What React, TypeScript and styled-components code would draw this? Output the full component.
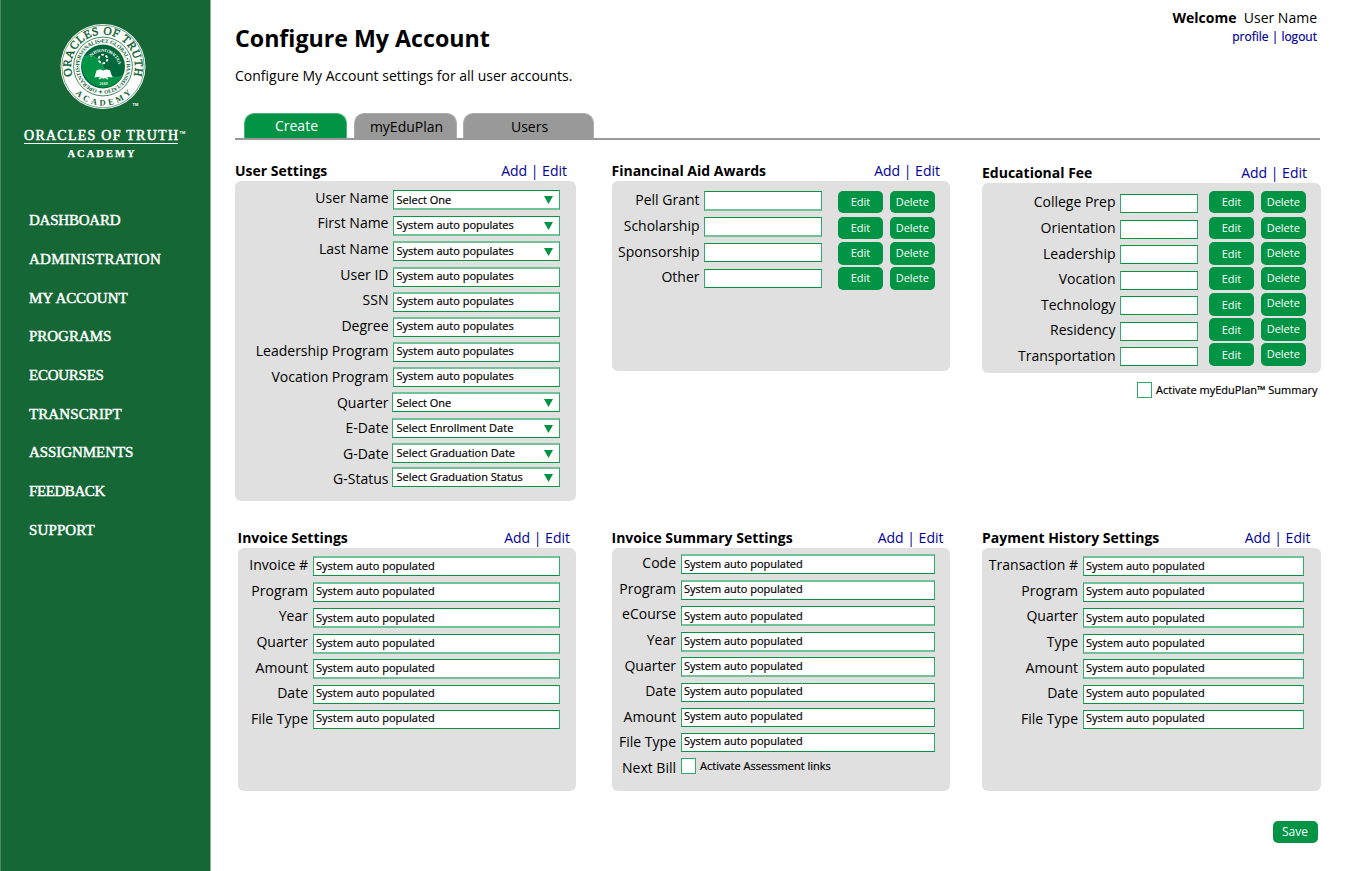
import React from "react";
import styled, { createGlobalStyle } from "styled-components";

const GREEN = "#009444";
const SOFT = "#73c297";

const GlobalStyle = createGlobalStyle`
  * { box-sizing: border-box; }
  body {
    margin: 0;
    background: #fff;
    color: #000;
    font-family: "Open Sans", "Noto Sans", sans-serif;
    font-size: 14px;
    line-height: 20px;
  }
`;

const Page = styled.div`
  display: flex;
  width: 1353px;
  height: 871px;
  overflow: hidden;
`;

const Sidebar = styled.aside`
  flex: none;
  width: 211px;
  height: 871px;
  background: #156735;
  border-left: 1px solid #4c8a63;
  border-right: 1px solid #8ab39a;
`;

const Logo = styled.svg`
  display: block;
  margin-left: -1px;
`;

const Nav = styled.nav`
  display: flex;
  flex-direction: column;
  padding: 40px 0 0 28px;
`;

const NavItem = styled.a<{ $h: number; $ls: number }>`
  height: ${(p) => p.$h}px;
  line-height: 20px;
  color: #fff;
  font-family: "Liberation Serif", serif;
  font-size: 15px;
  letter-spacing: ${(p) => p.$ls}px;
  -webkit-text-stroke: 0.45px #fff;
  white-space: nowrap;
`;

const Main = styled.main`
  flex: 1;
  padding-left: 24px;
`;

const Header = styled.header`
  display: flex;
  justify-content: space-between;
  width: 1082px;
  height: 113px;
`;

const Title = styled.h1`
  margin: 0;
  padding-top: 21px;
  font-size: 23.2px;
  line-height: 34px;
`;

const Subtitle = styled.p`
  margin: 11px 0 0;
`;

const Account = styled.div`
  padding-top: 8px;
  text-align: right;
`;

const Welcome = styled.div`
  white-space: pre;
`;

const AccountLinks = styled.div`
  font-size: 12px;
  line-height: 18px;
  color: #000099;
  -webkit-text-stroke: 0.2px #000099;
`;

const Tabs = styled.div`
  display: flex;
  width: 1085px;
  height: 27px;
  padding-left: 9px;
  border-bottom: 2px solid #999;
`;

const Tab = styled.button<{ $w: number; $gap: number; $active?: boolean }>`
  width: ${(p) => p.$w}px;
  height: 25px;
  margin: 0 ${(p) => p.$gap}px 0 0;
  padding: ${(p) => (p.$active ? 0 : 2)}px 0 ${(p) => (p.$active ? 1 : 0)}px 2px;
  border: 1px solid ${(p) => (p.$active ? "#4db37c" : "#adadad")};
  border-bottom: 0;
  border-radius: 10px 10px 0 0;
  background: ${(p) => (p.$active ? GREEN : "#999")};
  color: ${(p) => (p.$active ? "#fff" : "#000")};
  font: 14px/20px "Open Sans", sans-serif;
  text-align: center;
`;

const Board = styled.div`
  display: grid;
  grid-template-columns: 341px 339px 339px;
  column-gap: 35.5px;
  grid-template-rows: 367px auto;
  padding-top: 21px;
`;

const Section = styled.section<{ $left?: number; $top?: number; $width?: number }>`
  width: ${(p) => p.$width ?? 338.5}px;
  margin-left: ${(p) => p.$left ?? 0}px;
  padding-top: ${(p) => p.$top ?? 0}px;
`;

const SectionHead = styled.div<{ $right: number }>`
  display: flex;
  justify-content: space-between;
  height: 20px;
  padding-right: ${(p) => p.$right}px;
  white-space: nowrap;
`;

const SectionTitle = styled.h2`
  margin: 0;
  font-size: 14px;
  line-height: 20px;
`;

const SectionLinks = styled.span`
  color: #000099;
`;

const Panel = styled.div<{ $h: number; $pad: number }>`
  height: ${(p) => p.$h}px;
  padding-top: ${(p) => p.$pad}px;
  border-radius: 6px;
  background: #e0e0e0;
`;

const Row = styled.div<{ $h: number }>`
  display: flex;
  align-items: flex-start;
  height: ${(p) => p.$h}px;
`;

const Label = styled.label<{ $w: number }>`
  flex: none;
  width: ${(p) => p.$w}px;
  padding-right: 0.5px;
  margin-right: 4px;
  text-align: right;
  white-space: nowrap;
`;

type Edge = "top" | "bottom" | "none";

const Field = styled.div<{ $w: number; $dy: number; $soft: Edge; $wide?: boolean }>`
  flex: none;
  display: flex;
  justify-content: space-between;
  width: ${(p) => p.$w + (p.$wide ? 1 : 0)}px;
  height: ${(p) => (p.$soft === "none" ? 19 : 20)}px;
  margin-top: ${(p) => p.$dy}px;
  margin-left: ${(p) => (p.$wide ? -1 : 0)}px;
  padding: 0 5.5px 0 ${(p) => (p.$wide ? 3.5 : 2.5)}px;
  border: 1px solid #33a969;
  border-top: ${(p) => (p.$soft === "top" ? `2px solid ${SOFT}` : `1px solid ${GREEN}`)};
  border-bottom: ${(p) => (p.$soft === "bottom" ? `2px solid ${SOFT}` : `1px solid ${GREEN}`)};
  background: #fff;
`;

const FieldText = styled.span<{ $dy: number }>`
  height: 18px;
  margin-top: ${(p) => p.$dy}px;
  font-size: 11px;
  line-height: 18px;
  white-space: nowrap;
  -webkit-text-stroke: 0.2px #000;
`;

const Arrow = styled.svg`
  width: 9px;
  height: 8px;
  margin-top: 5px;
`;

const Button = styled.button<{ $dy?: number; $text?: number; $ml?: number; $fs?: number }>`
  flex: none;
  width: 45px;
  height: 22.5px;
  margin: ${(p) => p.$dy ?? 0}px 0 0 ${(p) => p.$ml ?? 0}px;
  padding: ${(p) => 2 + (p.$text ?? 0)}px 0 0;
  border: 0;
  border-radius: 5px;
  background: ${GREEN};
  color: #fff;
  display: flex;
  justify-content: center;
  font: ${(p) => p.$fs ?? 11}px/18px "Open Sans", sans-serif;
`;

const CheckLine = styled.div<{ $ml: number; $mt: number }>`
  display: flex;
  align-items: flex-start;
  margin: ${(p) => p.$mt}px 0 0 ${(p) => p.$ml}px;
  font-size: 11px;
  line-height: 16px;
  white-space: nowrap;
  -webkit-text-stroke: 0.2px #000;
`;

const CheckBox = styled.span`
  flex: none;
  width: 15px;
  height: 16px;
  margin-right: 4.5px;
  border: 1px solid #33a969;
  background: #fff;
`;

const Footer = styled.footer`
  display: flex;
  justify-content: flex-end;
  width: 1082.5px;
  padding-top: 29.5px;
`;

const NAV: [string, number, number][] = [
  ["DASHBOARD", 39, -0.22],
  ["ADMINISTRATION", 39, 0.26],
  ["MY ACCOUNT", 38, -0.05],
  ["PROGRAMS", 39, -0.02],
  ["ECOURSES", 39, -0.25],
  ["TRANSCRIPT", 38, 0.1],
  ["ASSIGNMENTS", 39, -0.06],
  ["FEEDBACK", 39, -0.42],
  ["SUPPORT", 39, 0.12],
];

type Item = {
  label: string;
  h: number;
  f: number;
  t?: number;
  value?: string;
  select?: boolean;
  soft?: Edge;
  wide?: boolean;
};

const POPULATES = "System auto populates";
const POPULATED = "System auto populated";

const USER: Item[] = [
  { label: "User Name", h: 25, f: 2, t: 0, value: "Select One", select: true, soft: "bottom" },
  { label: "First Name", h: 26, f: 3, t: -1, value: POPULATES, select: true, soft: "bottom" },
  { label: "Last Name", h: 26, f: 2, t: 0, value: POPULATES, select: true, soft: "top" },
  { label: "User ID", h: 25, f: 2, t: -1, value: POPULATES, soft: "top" },
  { label: "SSN", h: 26, f: 2, t: -1, value: POPULATES, soft: "top" },
  { label: "Degree", h: 25, f: 1, t: -1, value: POPULATES, soft: "top" },
  { label: "Leadership Program", h: 26, f: 1, t: -1, value: POPULATES, soft: "top" },
  { label: "Vocation Program", h: 26, f: 0, t: -1, value: POPULATES, soft: "top" },
  { label: "Quarter", h: 25, f: -1, t: 1, value: "Select One", select: true, soft: "top", wide: true },
  { label: "E-Date", h: 26, f: 0, t: 0, value: "Select Enrollment Date", select: true, soft: "top", wide: true },
  { label: "G-Date", h: 25, f: -1, t: 0, value: "Select Graduation Date", select: true, soft: "top", wide: true },
  { label: "G-Status", h: 20, f: -2, t: 0, value: "Select Graduation Status", select: true, soft: "top", wide: true },
];

const sevenRows = (labels: string[]): Item[] => {
  const h = [26, 25, 26, 26, 25, 26, 20];
  const f = [1, 1, 2, 2, 1, 2, 1];
  const t = [0, -1, 0, -1, -1, -2, -2];
  const soft: Edge[] = ["top", "top", "bottom", "bottom", "bottom", "none", "none"];
  return labels.map((label, i) => ({ label, h: h[i], f: f[i], t: t[i], soft: soft[i], value: POPULATED }));
};

const INVOICE = sevenRows(["Invoice #", "Program", "Year", "Quarter", "Amount", "Date", "File Type"]);
const PAYMENT = sevenRows(["Transaction #", "Program", "Quarter", "Type", "Amount", "Date", "File Type"]);
const SUMMARY: Item[] = [
  ...sevenRows(["Code", "Program", "eCourse", "Year", "Quarter", "Date", "Amount"]).map((r, i) =>
    i === 6 ? { ...r, h: 25 } : r
  ),
  { label: "File Type", h: 26, f: 1, t: -2, value: POPULATED, soft: "none" },
];

type ButtonItem = { label: string; h: number; f: number; b: number; e: number; d: number; soft: Edge };

const AID: ButtonItem[] = [
  { label: "Pell Grant", h: 26, f: 1, b: 0.7, e: 0, d: 0, soft: "bottom" },
  { label: "Scholarship", h: 26, f: 1, b: 0.7, e: 0, d: 0, soft: "bottom" },
  { label: "Sponsorship", h: 25, f: 1, b: 0, e: 0, d: 0, soft: "none" },
  { label: "Other", h: 20, f: 2, b: 0, e: 0, d: 0, soft: "none" },
];

const FEE: ButtonItem[] = [
  { label: "College Prep", h: 26, f: 2, b: -1.3, e: 0, d: 0, soft: "none" },
  { label: "Orientation", h: 26, f: 2, b: -1.3, e: 0, d: 0, soft: "none" },
  { label: "Leadership", h: 25, f: 1, b: -2, e: 1, d: 0, soft: "none" },
  { label: "Vocation", h: 26, f: 2, b: -2, e: 1, d: 0, soft: "none" },
  { label: "Technology", h: 25, f: 1, b: -2, e: 1, d: -1, soft: "none" },
  { label: "Residency", h: 26, f: 2, b: -2, e: 1, d: 0, soft: "none" },
  { label: "Transportation", h: 20, f: 1, b: -3, e: 1, d: 0, soft: "none" },
];

function Head({ title, right }: { title: string; right: number }) {
  return (
    <SectionHead $right={right}>
      <SectionTitle>{title}</SectionTitle>
      <SectionLinks>Add | Edit</SectionLinks>
    </SectionHead>
  );
}

function FormRows({ items, label, field }: { items: Item[]; label: number; field: number }) {
  return (
    <>
      {items.map((r) => (
        <Row key={r.label} $h={r.h}>
          <Label $w={label}>{r.label}</Label>
          <Field $w={field} $dy={r.f} $soft={r.soft ?? "none"} $wide={r.wide}>
            <FieldText $dy={(r.t ?? 0) - (r.soft === "top" ? 1 : 0)}>{r.value}</FieldText>
            {r.select && (
              <Arrow viewBox="0 0 9 8">
                <path d="M0 0H9L4.5 8Z" fill={GREEN} />
              </Arrow>
            )}
          </Field>
        </Row>
      ))}
    </>
  );
}

function ButtonRows({ items, label, field, space }: { items: ButtonItem[]; label: number; field: number; space: number }) {
  return (
    <>
      {items.map((r) => (
        <Row key={r.label} $h={r.h}>
          <Label $w={label}>{r.label}</Label>
          <Field $w={field} $dy={r.f} $soft={r.soft} />
          <Button $dy={r.b} $ml={space} $text={r.e}>Edit</Button>
          <Button $dy={r.b} $ml={6.8} $text={r.d}>Delete</Button>
        </Row>
      ))}
    </>
  );
}

function Brand() {
  return (
    <Logo width="210" height="170" viewBox="0 0 210 170" fontFamily="Liberation Serif, serif">
      <defs>
        <path id="outerTop" d="M71 66.5A32 32 0 1 1 135 66.5A32 32 0 0 1 71 66.5" transform="rotate(-17 103 66.5)" />
        <path id="outerBottom" d="M64 66.5A39 39 0 0 0 142 66.5" />
        <path id="innerTop" d="M79.3 66.5A23.7 23.7 0 1 1 126.7 66.5A23.7 23.7 0 1 1 79.3 66.5" transform="rotate(-90 103 66.5)" />
        <path id="motto" d="M91 57A16 16 0 0 1 118.5 71" />
      </defs>
      <circle cx="103" cy="66.5" r="42.5" fill="#fff" />
      <circle cx="103" cy="66.5" r="41.2" fill="none" stroke="#156735" strokeWidth="0.6" />
      <circle cx="103" cy="66.5" r="29.4" fill="none" stroke="#156735" strokeWidth="0.8" />
      <circle cx="103" cy="66.5" r="22" fill="#00693c" />
      <path d="M83 57.5C90 53 100 57 103 66.5C106 76 116 80 123 75.5A22 22 0 0 1 83 57.5Z" fill={GREEN} />
      <path d="M83 57.5C90 53 100 57 103 66.5C106 76 116 80 123 75.5" fill="none" stroke="#58a77d" strokeWidth="0.5" />
      <text fontSize="11.5" fill="#156735" stroke="#156735" strokeWidth="0.45">
        <textPath href="#outerTop" textLength="119">ORACLES OF TRUTH</textPath>
      </text>
      <text fontSize="8.5" fontWeight="bold" fill="#156735">
        <textPath href="#outerBottom" startOffset="30" textLength="63">ACADEMY</textPath>
      </text>
      <text fontSize="5.6" fontWeight="bold" fill="#156735">
        <textPath href="#innerTop" textLength="147">✦ OPERANTIS•PERSONALIS•ET GLOBAL•TRANSMUTATIO</textPath>
      </text>
      <text fontSize="4.4" fontWeight="bold" fill="#fff">
        <textPath href="#motto" textLength="35">NOS SUNT ORACULA</textPath>
      </text>
      <circle cx="103" cy="59" r="4.3" fill="none" stroke="#fff" strokeWidth="1.8" strokeDasharray="2.6 1.9" />
      <path d="M94.5 77.5L96.5 70.5Q100.5 68.3 103.3 70.8Q106 68.3 110 70.5L112.5 77.5Q107.5 76 103.5 78.8Q99 76 94.5 77.5Z" fill="#fff" />
      <path d="M99 79L101.5 77.5M108 79L105.5 77.5" stroke="#fff" strokeWidth="1.2" />
      <text x="99.5" y="84.5" fontSize="3.6" fontWeight="bold" fill="#fff" textLength="8">2009</text>
      <text x="132.5" y="105.5" fontSize="4" fontFamily="Liberation Sans" fontWeight="bold" fill="#fff">TM</text>
      <g fill="#fff">
        <text x="24" y="140.3" fontSize="14" stroke="#fff" strokeWidth="0.5" textLength="154">ORACLES OF TRUTH</text>
        <text x="179.5" y="133.5" fontSize="4" fontFamily="Liberation Sans" fontWeight="bold">TM</text>
        <rect x="24" y="143" width="154" height="1" />
        <text x="67.5" y="156.6" fontSize="10.5" fontWeight="bold" stroke="#fff" strokeWidth="0.25" textLength="67">ACADEMY</text>
      </g>
    </Logo>
  );
}

export default function App() {
  return (
    <Page>
      <GlobalStyle />
      <Sidebar>
        <Brand />
        <Nav>
          {NAV.map(([text, h, ls]) => (
            <NavItem key={text} $h={h} $ls={ls}>{text}</NavItem>
          ))}
        </Nav>
      </Sidebar>
      <Main>
        <Header>
          <div>
            <Title>Configure My Account</Title>
            <Subtitle>Configure My Account settings for all user accounts.</Subtitle>
          </div>
          <Account>
            <Welcome><b>Welcome</b>{"  User Name"}</Welcome>
            <AccountLinks>profile | logout</AccountLinks>
          </Account>
        </Header>
        <Tabs>
          <Tab $w={103} $gap={7} $active>Create</Tab>
          <Tab $w={103} $gap={6}>myEduPlan</Tab>
          <Tab $w={131} $gap={0}>Users</Tab>
        </Tabs>
        <Board>
          <Section $width={341}>
            <Head title="User Settings" right={9} />
            <Panel $h={320} $pad={7}>
              <FormRows items={USER} label={154} field={166.5} />
            </Panel>
          </Section>
          <Section>
            <Head title="Financinal Aid Awards" right={10} />
            <Panel $h={190} $pad={9}>
              <ButtonRows items={AID} label={88.5} field={117.5} space={16.5} />
            </Panel>
          </Section>
          <Section $top={2} $left={-4}>
            <Head title="Educational Fee" right={13.5} />
            <Panel $h={190} $pad={9}>
              <ButtonRows items={FEE} label={134} field={78} space={11} />
            </Panel>
            <CheckLine $ml={154.5} $mt={9}>
              <CheckBox />
              <span>Activate myEduPlan™ Summary</span>
            </CheckLine>
          </Section>
          <Section $left={2.5}>
            <Head title="Invoice Settings" right={6} />
            <Panel $h={243} $pad={7}>
              <FormRows items={INVOICE} label={71} field={247} />
            </Panel>
          </Section>
          <Section>
            <Head title="Invoice Summary Settings" right={6.5} />
            <Panel $h={243} $pad={5}>
              <FormRows items={SUMMARY} label={65} field={254.5} />
              <Row $h={20}>
                <Label $w={65}>Next Bill</Label>
                <CheckLine $ml={0} $mt={0}>
                  <CheckBox />
                  <span>Activate Assessment links</span>
                </CheckLine>
              </Row>
            </Panel>
          </Section>
          <Section $left={-4}>
            <Head title="Payment History Settings" right={10} />
            <Panel $h={243} $pad={7}>
              <FormRows items={PAYMENT} label={96.5} field={221.5} />
            </Panel>
          </Section>
        </Board>
        <Footer>
          <Button $fs={12}>Save</Button>
        </Footer>
      </Main>
    </Page>
  );
}
